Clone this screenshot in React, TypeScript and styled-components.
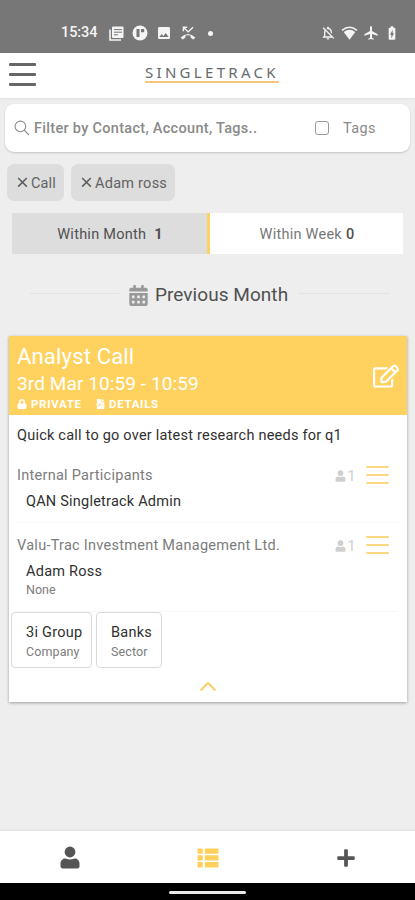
import React from 'react';
import styled, { createGlobalStyle } from 'styled-components';
import { FaCalendarAlt, FaFileMedicalAlt, FaLock, FaPlus, FaRegEdit } from 'react-icons/fa';
import {
  MdAirplanemodeActive,
  MdBatteryChargingFull,
  MdImage,
  MdOutlineNotificationsOff,
} from 'react-icons/md';

const GlobalStyle = createGlobalStyle`
  * { box-sizing: border-box; }
  body { margin: 0; background: #eeeeee; font-family: Roboto, sans-serif; }
  svg { display: block; flex: none; }
`;

const yellow = '#ffd260';

const Screen = styled.div`
  width: 415px;
  height: 900px;
  display: flex;
  flex-direction: column;
  overflow: hidden;
  background: #eeeeee;
  color: #505050;
`;

const Label = styled.span<{ $size?: number; $track?: number; $weight?: number; $color?: string }>`
  font-size: ${(p) => p.$size ?? 14.5}px;
  line-height: 20px;
  letter-spacing: ${(p) => p.$track ?? 0.25}px;
  font-weight: ${(p) => p.$weight ?? 400};
  color: ${(p) => p.$color ?? 'inherit'};
  white-space: nowrap;
`;

const StatusBar = styled.div`
  height: 53px;
  flex: none;
  background: #777777;
  color: #f5f5f5;
  display: flex;
  align-items: center;
  justify-content: space-between;
  padding: 13px 15px 0 61px;
`;

const StatusGroup = styled.div<{ $gap: number }>`
  display: flex;
  align-items: center;
  gap: ${(p) => p.$gap}px;
`;

const Clock = styled(Label)`
  width: 39px;
  margin-right: 1px;
`;

const Dot = styled.span`
  width: 5px;
  height: 5px;
  margin-left: 4px;
  border-radius: 50%;
  background: #f5f5f5;
`;

const Header = styled.header`
  height: 45px;
  flex: none;
  display: flex;
  align-items: flex-start;
  background: #ffffff;
  box-shadow: 0 1px 2px rgba(0, 0, 0, 0.06);
`;

const Bars = styled.div<{ $width: number; $gap: number; $thick: number; $color: string }>`
  width: ${(p) => p.$width}px;
  display: flex;
  flex-direction: column;
  gap: ${(p) => p.$gap}px;
  & > i {
    height: ${(p) => p.$thick}px;
    border-radius: 1px;
    background: ${(p) => p.$color};
  }
`;

const MenuButton = styled.div`
  padding: 10px 0 0 9px;
  width: 145px;
`;

const Logo = styled.div`
  margin-top: 11px;
  width: 134px;
  height: 19px;
  border-bottom: 2px solid #f3c57d;
  font-family: 'Noto Sans', sans-serif;
  font-size: 15px;
  line-height: 17px;
  letter-spacing: 3.3px;
  color: #666a6c;
  white-space: nowrap;
`;

const SearchBox = styled.div`
  height: 48px;
  margin: 6px 5px 0;
  flex: none;
  display: flex;
  align-items: center;
  border-radius: 9px;
  background: #ffffff;
  box-shadow: 0 1px 2px rgba(0, 0, 0, 0.18);
  padding-left: 9px;
  color: #8a8a8a;
`;

const Query = styled.div`
  width: 285px;
  padding: 2px 0 0 4px;
  display: flex;
`;

const CheckBox = styled.span`
  width: 14px;
  height: 14px;
  border: 1px solid #999999;
  border-radius: 3px;
  margin-right: 14px;
`;

const TagsLabel = styled(Label)`
  padding-top: 2px;
`;

const Chips = styled.div`
  display: flex;
  gap: 7px;
  margin: 12px 7px 0;
`;

const Chip = styled.div<{ $width: number }>`
  width: ${(p) => p.$width}px;
  height: 37px;
  padding: 0 0 0 10px;
  display: flex;
  align-items: center;
  gap: 3px;
  border-radius: 7px;
  background: #dddddd;
  color: #626262;
  & > span { padding-top: 2px; }
`;

const Tabs = styled.div`
  display: flex;
  height: 41px;
  margin: 12px 12px 0;
`;

const Tab = styled.div<{ $active?: boolean }>`
  flex: ${(p) => (p.$active ? '0 0 198px' : '1')};
  display: flex;
  align-items: center;
  justify-content: center;
  gap: ${(p) => (p.$active ? 8 : 4)}px;
  padding: 2px 0 0 1px;
  background: ${(p) => (p.$active ? '#dddddd' : '#ffffff')};
  border-right: ${(p) => (p.$active ? `3px solid ${yellow}` : 'none')};
`;

const SectionTitle = styled.div`
  height: 24px;
  margin: 29px 25px 0 30px;
  display: flex;
  align-items: center;
`;

const Rule = styled.span<{ $width: number }>`
  width: ${(p) => p.$width}px;
  height: 1px;
  margin-bottom: 3px;
  background: #e2e2e2;
`;

const Month = styled.div`
  display: flex;
  align-items: center;
  gap: 6px;
  width: 179px;
  padding-left: 9px;
`;

const Card = styled.section`
  height: 366px;
  flex: none;
  margin: 29px 8px 0 9px;
  background: #ffffff;
  box-shadow: 0 1px 3px rgba(0, 0, 0, 0.34);
`;

const CardHeader = styled.div`
  height: 79px;
  display: flex;
  justify-content: space-between;
  background: ${yellow};
  color: #ffffff;
  padding: 7px 8px 0 8px;
`;

const HeaderLines = styled.div`
  display: flex;
  flex-direction: column;
`;

const HeaderLine = styled.div<{ $height: number }>`
  height: ${(p) => p.$height}px;
  display: flex;
  align-items: center;
`;

const Flag = styled.span<{ $width: number }>`
  width: ${(p) => p.$width}px;
  display: flex;
  align-items: center;
  gap: 4px;
`;

const EditButton = styled.div`
  padding-top: 20px;
`;

const Note = styled.div`
  height: 46px;
  padding: 11px 8px 0;
  display: flex;
`;

const Participants = styled.div<{ $height: number; $top: number }>`
  height: ${(p) => p.$height}px;
  margin: 0 9px 0 8px;
  padding-top: ${(p) => p.$top}px;
  border-bottom: 1px solid #f8f8f8;
`;

const GroupRow = styled.div`
  height: 20px;
  display: flex;
  align-items: center;
  justify-content: space-between;
  padding-right: 9px;
`;

const Tally = styled.div`
  display: flex;
  align-items: center;
  gap: 1px;
  color: #cfcfcf;
  & > div { margin: 0 0 3px 9px; }
`;

const Person = styled.div`
  display: flex;
  flex-direction: column;
  padding: 6px 0 0 9px;
`;

const Role = styled(Label)`
  margin-top: -2px;
`;

const SubjectList = styled.div`
  display: flex;
  gap: 4px;
  margin-left: 2px;
`;

const Subject = styled.div<{ $width: number }>`
  width: ${(p) => p.$width}px;
  height: 56px;
  display: flex;
  flex-direction: column;
  padding: 10px 0 0 14px;
  border: 1px solid #dadada;
  border-radius: 4px;
  & > span + span { margin-top: -1px; }
`;

const Collapse = styled.div`
  display: flex;
  justify-content: center;
  margin-top: 13px;
`;

const BottomNav = styled.nav`
  height: 52px;
  flex: none;
  margin-top: auto;
  display: grid;
  grid-template-columns: repeat(3, 1fr);
  justify-items: center;
  align-items: center;
  padding: 1px 0 0 1px;
  background: #ffffff;
  box-shadow: 0 -1px 2px rgba(0, 0, 0, 0.07);
  color: #555555;
`;

const GestureBar = styled.div`
  height: 17px;
  flex: none;
  display: flex;
  justify-content: center;
  align-items: center;
  padding-top: 2px;
  background: #000000;
  & > i { width: 77px; height: 3px; border-radius: 2px; background: #e9e9e9; }
`;

const CrossIcon = () => (
  <svg width="11" height="11" viewBox="0 0 11 11" stroke="#5c5c5c" strokeWidth="1.5">
    <path d="M1.2 1L9.8 9.6M9.8 1L1.2 9.6" />
  </svg>
);

const SearchIcon = () => (
  <svg width="16" height="16" viewBox="0 0 16 16" fill="none" stroke="#8d8d8d" strokeWidth="1.1">
    <circle cx="6.4" cy="6.4" r="5.3" />
    <path d="M10.2 10.2L15 15" />
  </svg>
);

const NewsIcon = () => (
  <svg width="15" height="15" viewBox="0 0 15 15" fill="none">
    <path d="M1 3.5V14h11" stroke="#f5f5f5" strokeWidth="1.6" />
    <rect x="3" y=".5" width="11.5" height="11.5" rx="1" fill="#f5f5f5" />
    <path d="M5 3.6h8M5 6.2h8M5 8.8h4" stroke="#777" strokeWidth="1" />
  </svg>
);

const FlipIcon = () => (
  <svg width="16" height="16" viewBox="0 0 16 16">
    <circle cx="8" cy="8" r="7.5" fill="#f5f5f5" />
    <path d="M4.5 4h3v8h-3zM9 4h3.2v3.3H9z" fill="#777" />
  </svg>
);

const MissedCallIcon = () => (
  <svg width="16" height="14" viewBox="0 0 16 14" fill="none">
    <path d="M3.4 5.2V1.3h3.8M3.6 1.5l4.6 4.4L13 1.2" stroke="#f5f5f5" strokeWidth="1.4" />
    <path d="M.6 11.4Q8 4.4 15.4 11.4L13.2 13.4 10.6 11.5V9.6Q8 8.8 5.4 9.6v1.9L2.8 13.4z" fill="#f5f5f5" />
  </svg>
);

const WifiIcon = () => (
  <svg width="17" height="15" viewBox="0 0 17 15" fill="none">
    <path d="M1 4.4Q8.5-2 16 4.4" stroke="#f5f5f5" strokeWidth="1.4" />
    <path d="M2.7 6.1Q8.5 1.6 14.3 6.1L8.5 13.7Z" fill="#f5f5f5" />
  </svg>
);

const PersonIcon = ({ width, height }: { width: number; height: number }) => (
  <svg width={width} height={height} viewBox="0 0 20 23" fill="currentColor">
    <circle cx="10" cy="6" r="5.4" />
    <path d="M.5 20v-2.5c0-3 2.3-5 5-5 1.2 0 1.5.9 4.5.9s3.3-.9 4.5-.9c2.7 0 5 2 5 5V20c0 1.5-.8 2.4-2.3 2.4H2.8C1.3 22.4.5 21.5.5 20z" />
  </svg>
);

const ListIcon = () => (
  <svg width="22" height="20" viewBox="0 0 22 20" fill="#ffd15c">
    {[0.5, 7.3, 14.1].map((y) => (
      <React.Fragment key={y}>
        <rect x=".5" y={y} width="5.3" height="5.3" rx=".7" />
        <rect x="7.8" y={y} width="13.7" height="5.3" rx=".7" />
      </React.Fragment>
    ))}
  </svg>
);

const TripleBar = (props: { width: number; gap: number; thick: number; color: string }) => (
  <Bars $width={props.width} $gap={props.gap} $thick={props.thick} $color={props.color}>
    <i />
    <i />
    <i />
  </Bars>
);

const GroupHeading = ({ name }: { name: string }) => (
  <GroupRow>
    <Label $track={0.27} $color="#7c7c7c">{name}</Label>
    <Tally>
      <PersonIcon width={11} height={12} />
      <Label $size={15}>1</Label>
      <TripleBar width={23} gap={6} thick={2} color="#fad783" />
    </Tally>
  </GroupRow>
);

export default function App() {
  return (
    <Screen>
      <GlobalStyle />
      <StatusBar>
        <StatusGroup $gap={8}>
          <Clock $track={-0.1} $weight={500}>15:34</Clock>
          <NewsIcon />
          <FlipIcon />
          <MdImage size={16} />
          <MissedCallIcon />
          <Dot />
        </StatusGroup>
        <StatusGroup $gap={5}>
          <MdOutlineNotificationsOff size={16} />
          <WifiIcon />
          <MdAirplanemodeActive size={16} />
          <MdBatteryChargingFull size={16} />
        </StatusGroup>
      </StatusBar>
      <Header>
        <MenuButton>
          <TripleBar width={27} gap={7} thick={3} color="#666666" />
        </MenuButton>
        <Logo>SINGLETRACK</Logo>
      </Header>
      <SearchBox>
        <SearchIcon />
        <Query>
          <Label $track={0.3} $weight={500}>Filter by Contact, Account, Tags..</Label>
        </Query>
        <CheckBox />
        <TagsLabel $track={0.4}>Tags</TagsLabel>
      </SearchBox>
      <Chips>
        <Chip $width={57}>
          <CrossIcon />
          <Label $track={0.1}>Call</Label>
        </Chip>
        <Chip $width={104}>
          <CrossIcon />
          <Label>Adam ross</Label>
        </Chip>
      </Chips>
      <Tabs>
        <Tab $active>
          <Label>Within Month</Label>
          <Label $weight={700}>1</Label>
        </Tab>
        <Tab>
          <Label $color="#777777">Within Week</Label>
          <Label $weight={500}>0</Label>
        </Tab>
      </Tabs>
      <SectionTitle>
        <Rule $width={89} />
        <Month>
          <FaCalendarAlt size={21} color="#999999" />
          <Label $size={19} $track={0.05}>Previous Month</Label>
        </Month>
        <Rule $width={92} />
      </SectionTitle>
      <Card>
        <CardHeader>
          <HeaderLines>
            <HeaderLine $height={27}>
              <Label $size={22} $track={0.18}>Analyst Call</Label>
            </HeaderLine>
            <HeaderLine $height={27}>
              <Label $size={19} $track={0.1}>3rd Mar 10:59 - 10:59</Label>
            </HeaderLine>
            <HeaderLine $height={14}>
              <Flag $width={78}>
                <FaLock size={10} />
                <Label $size={11.5} $track={0.7} $weight={700}>PRIVATE</Label>
              </Flag>
              <Flag $width={70}>
                <FaFileMedicalAlt size={10} />
                <Label $size={11.5} $track={0.7} $weight={700}>DETAILS</Label>
              </Flag>
            </HeaderLine>
          </HeaderLines>
          <EditButton>
            <FaRegEdit size={26} />
          </EditButton>
        </CardHeader>
        <Note>
          <Label $track={0.22} $color="#303030">Quick call to go over latest research needs for q1</Label>
        </Note>
        <Participants $height={62} $top={5}>
          <GroupHeading name="Internal Participants" />
          <Person>
            <Label $track={0.22} $color="#303030">QAN Singletrack Admin</Label>
          </Person>
        </Participants>
        <Participants $height={89} $top={13}>
          <GroupHeading name="Valu-Trac Investment Management Ltd." />
          <Person>
            <Label $color="#303030">Adam Ross</Label>
            <Role $size={12.5} $track={0} $color="#7c7c7c">None</Role>
          </Person>
        </Participants>
        <SubjectList>
          <Subject $width={81}>
            <Label $color="#303030">3i Group</Label>
            <Label $size={12.5} $track={0.1} $color="#7c7c7c">Company</Label>
          </Subject>
          <Subject $width={66}>
            <Label $color="#303030">Banks</Label>
            <Label $size={12.5} $track={0.1} $color="#7c7c7c">Sector</Label>
          </Subject>
        </SubjectList>
        <Collapse>
          <svg width="18" height="11" viewBox="0 0 18 11" fill="none" stroke="#fbd067" strokeWidth="2">
            <path d="M1.5 9.5L9 2L16.5 9.5" />
          </svg>
        </Collapse>
      </Card>
      <BottomNav>
        <PersonIcon width={20} height={23} />
        <ListIcon />
        <FaPlus size={20} />
      </BottomNav>
      <GestureBar>
        <i />
      </GestureBar>
    </Screen>
  );
}
